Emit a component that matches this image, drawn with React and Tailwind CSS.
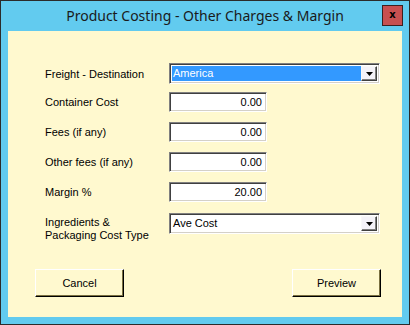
import React from 'react';

const sunken =
  'border border-t-[#808080] border-l-[#808080] border-b-white border-r-white shadow-[inset_1px_1px_0_#404040,inset_-1px_-1px_0_#d4d0c8]';

function DropArrow() {
  return (
    <div className="w-[16px] h-full bg-[#f4f2f8] border border-t-[#f8f8f8] border-l-[#f8f8f8] border-b-[#404040] border-r-[#404040] shadow-[inset_-1px_-1px_0_#808080] flex items-center justify-center">
      <svg width="7" height="4" viewBox="0 0 7 4">
        <path d="M0 0h7L3.5 4z" fill="#000" />
      </svg>
    </div>
  );
}

function Combo({ value, selected }) {
  return (
    <div className={`w-[211px] h-[21px] bg-white p-[2px] flex ${sunken}`}>
      <div className={`flex-1 flex items-center pl-[1px] ${selected ? 'bg-[#3399ff] text-white' : 'text-black'}`}>
        {value}
      </div>
      <DropArrow />
    </div>
  );
}

function NumBox({ value }) {
  return (
    <div className={`w-[98px] h-[20px] bg-white flex items-center justify-end pr-[4px] text-black ${sunken}`}>
      {value}
    </div>
  );
}

function Row({ label, children, className = '', labelClass = 'leading-[14px]' }) {
  return (
    <div className={`flex items-center ${className}`}>
      <div className={`w-[124px] ${labelClass}`}>{label}</div>
      {children}
    </div>
  );
}

function Btn({ children }) {
  return (
    <button
      type="button"
      className="w-[89px] h-[28px] bg-[#fff9cf] border border-t-white border-l-white border-b-black border-r-black shadow-[inset_-1px_-1px_0_#7a7040] flex items-center justify-center text-black"
    >
      {children}
    </button>
  );
}

export default function App() {
  return (
    <div className="w-[410px] h-[325px] bg-[#62cbef] border border-[#2b2b2b] flex flex-col">
      <div className="h-[30px] relative flex items-center justify-center">
        <span className="font-['Noto_Sans',sans-serif] text-[14px] text-[#1a1a1a] -mt-[1px]">
          Product Costing - Other Charges &amp; Margin
        </span>
        <div className="absolute right-[6px] top-[4px] w-[21px] h-[21px] bg-[#c75050] border border-[#3c2020] flex items-center justify-center">
          <span className="font-['DejaVu_Sans',sans-serif] text-[10px] font-bold text-black leading-none -mt-[1px]">x</span>
        </div>
      </div>
      <div className="mx-[7px] mb-[7px] flex-1 bg-[#fff9cf] font-['Liberation_Sans',sans-serif] text-[11px] text-black pl-[37px] pt-[32px] flex flex-col">
        <Row label="Freight - Destination">
          <Combo value="America" selected />
        </Row>
        <Row label="Container Cost" className="mt-[8px]">
          <NumBox value="0.00" />
        </Row>
        <Row label="Fees (if any)" className="mt-[10px]">
          <NumBox value="0.00" />
        </Row>
        <Row label="Other fees (if any)" className="mt-[10px]">
          <NumBox value="0.00" />
        </Row>
        <Row label="Margin %" className="mt-[10px]">
          <NumBox value="20.00" />
        </Row>
        <Row
          label={<>Ingredients &amp;<br />Packaging Cost Type</>}
          className="mt-[11px] items-start"
          labelClass="pt-[3px] leading-[13px]"
        >
          <Combo value="Ave Cost" />
        </Row>
        <div className="flex justify-between w-[346px] -ml-[10px] mt-[27px]">
          <Btn>Cancel</Btn>
          <Btn>Preview</Btn>
        </div>
      </div>
    </div>
  );
}
